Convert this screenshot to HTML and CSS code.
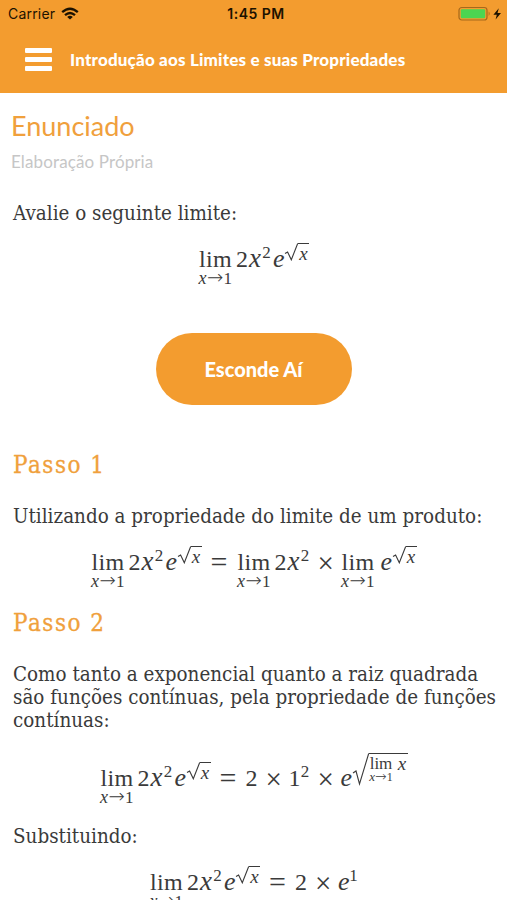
FILE: index.html
```html
<!DOCTYPE html>
<html lang="pt-BR">
<head>
    <meta charset="UTF-8">
    <meta name="viewport" content="width=device-width, initial-scale=1.0">
    <title>Introdução aos Limites e suas Propriedades</title>
    <link rel="stylesheet" href="styles.css">
</head>
<body>

    <header>
        <div class="status-bar">
            <div class="carrier">
                <span>Carrier</span>
                <svg width="18" height="14" viewBox="0 0 18 14" fill="none" stroke="#1c1200" stroke-width="2.3">
                    <path d="M1.2 5.2Q9 -1.8 16.8 5.2"/>
                    <path d="M4 8.2Q9 3.8 14 8.2"/>
                    <path d="M9 12.6L6.2 9.9Q9 7.6 11.8 9.9Z" fill="#1c1200" stroke="none"/>
                </svg>
            </div>
            <span class="time">1:45 PM</span>
            <div class="battery">
                <svg width="44" height="16" viewBox="0 0 44 16">
                    <rect x="1" y="1.5" width="28" height="12.5" rx="2.8" fill="none" stroke="#a5691c" stroke-width="1.2"/>
                    <rect x="2.8" y="3.2" width="24.4" height="9" rx="1.2" fill="#4cd551"/>
                    <path d="M30.7 5.6Q32.6 7.7 30.7 9.9Z" fill="#a5691c"/>
                    <path d="M40.8 2.2L35.4 8.7H38.8L37.6 13.6L43 7H39.5Z" fill="#1c1200"/>
                </svg>
            </div>
        </div>
        <div class="nav">
            <div class="menu"><span></span><span></span><span></span></div>
            <h1>Introdução aos Limites e suas Propriedades</h1>
        </div>
    </header>

    <main>
        <h2>Enunciado</h2>
        <p class="source">Elaboração Própria</p>

        <p class="text first">Avalie o seguinte limite:</p>
        <div class="math">
            <span class="lim"><span>lim</span><span class="under"><i>x</i><b>→</b>1</span></span><span class="num">2</span><i class="var">x</i><span class="sup">2</span><i class="exp">e</i><span class="root"><svg width="14" height="18" viewBox="0 0 14 18"><path d="M1 10.5L3.6 9L7.3 16.8L13.7 .5"/></svg><i>x</i></span>
        </div>

        <button>Esconde Aí</button>

        <h3>Passo 1</h3>
        <p class="text">Utilizando a propriedade do limite de um produto:</p>
        <div class="math">
            <span class="lim"><span>lim</span><span class="under"><i>x</i><b>→</b>1</span></span><span class="num">2</span><i class="var">x</i><span class="sup">2</span><i class="exp">e</i><span class="root"><svg width="14" height="18" viewBox="0 0 14 18"><path d="M1 10.5L3.6 9L7.3 16.8L13.7 .5"/></svg><i>x</i></span><span class="eq">=</span><span class="lim"><span>lim</span><span class="under"><i>x</i><b>→</b>1</span></span><span class="num">2</span><i class="var">x</i><span class="sup">2</span><span class="times">×</span><span class="lim"><span>lim</span><span class="under"><i>x</i><b>→</b>1</span></span><i class="exp">e</i><span class="root"><svg width="14" height="18" viewBox="0 0 14 18"><path d="M1 10.5L3.6 9L7.3 16.8L13.7 .5"/></svg><i>x</i></span>
        </div>

        <h3>Passo 2</h3>
        <p class="text">Como tanto a exponencial quanto a raiz quadrada<br>são funções contínuas, pela propriedade de funções<br>contínuas:</p>
        <div class="math tall">
            <span class="lim"><span>lim</span><span class="under"><i>x</i><b>→</b>1</span></span><span class="num">2</span><i class="var">x</i><span class="sup">2</span><i class="exp">e</i><span class="root"><svg width="14" height="18" viewBox="0 0 14 18"><path d="M1 10.5L3.6 9L7.3 16.8L13.7 .5"/></svg><i>x</i></span><span class="eq">=</span><span class="num">2</span><span class="times">×</span><span class="num">1</span><span class="sup">2</span><span class="times">×</span><i class="exp">e</i><span class="root big"><svg width="17" height="33" viewBox="0 0 17 33"><path d="M1 20L4 18L7.5 31L16.7 .5"/></svg><span class="inner"><span class="small-lim"><span>lim</span><span class="under"><i>x</i><b>→</b>1</span></span><i>x</i></span></span>
        </div>

        <p class="text">Substituindo:</p>
        <div class="math">
            <span class="lim"><span>lim</span><span class="under"><i>x</i><b>→</b>1</span></span><span class="num">2</span><i class="var">x</i><span class="sup">2</span><i class="exp">e</i><span class="root"><svg width="14" height="18" viewBox="0 0 14 18"><path d="M1 10.5L3.6 9L7.3 16.8L13.7 .5"/></svg><i>x</i></span><span class="eq">=</span><span class="num">2</span><span class="times">×</span><i class="exp">e</i><span class="sup">1</span>
        </div>
    </main>

</body>
</html>
```
FILE: styles.css
```css
* {
    box-sizing: border-box;
}
body {
    margin: 0;
    height: 900px;
    overflow: hidden;
    background-color: #fff;
    color: #3a3a3a;
    font-family: Lato, sans-serif;
}
h1, h2, h3, p {
    margin: 0;
}
/* Topo */
header {
    height: 93px;
    background-color: #f39c2f;
}
.status-bar {
    display: grid;
    grid-template-columns: 1fr auto 1fr;
    align-items: center;
    height: 27px;
    padding: 0 5px 0 8px;
    color: #1c1200;
    font-family: Inter, sans-serif;
    font-size: 14px;
    letter-spacing: 0.2px;
}
.carrier {
    display: flex;
    align-items: center;
    gap: 6px;
}
.time {
    padding-left: 2px;
    font-weight: 600;
    letter-spacing: 0.5px;
}
.battery {
    display: flex;
    justify-content: flex-end;
}
.nav {
    display: flex;
    align-items: center;
    height: 65px;
    padding-left: 25px;
    gap: 18px;
}
.menu {
    display: flex;
    flex-direction: column;
    gap: 4px;
}
.menu span {
    width: 27px;
    height: 5px;
    border-radius: 1px;
    background-color: #fff;
}
h1 {
    color: #fff;
    font-size: 17px;
    font-weight: 900;
    letter-spacing: 0.18px;
    white-space: nowrap;
}
/* Conteúdo */
main {
    padding: 17px 11px 0;
}
h2 {
    color: #f0a03c;
    font-size: 27px;
    font-weight: 400;
    line-height: 32px;
}
.source {
    margin-top: 10px;
    color: #c6c6c6;
    font-size: 17px;
    letter-spacing: 0.12px;
    line-height: 20px;
}
.text {
    padding-left: 2px;
    font-family: "DejaVu Serif Condensed", "DejaVu Serif", serif;
    font-stretch: condensed;
    font-size: 20.4px;
    letter-spacing: 0.01px;
    line-height: 23px;
    white-space: nowrap;
}
.first {
    margin-top: 30px;
}
h3 {
    padding-left: 2px;
    margin-bottom: 26px;
    color: #f0a03c;
    font-family: "DejaVu Serif Condensed", "DejaVu Serif", serif;
    font-stretch: condensed;
    font-size: 24px;
    font-weight: 400;
    letter-spacing: 1.5px;
    line-height: 28px;
    -webkit-text-stroke: 0.3px #f0a03c;
}
button {
    display: block;
    width: 196px;
    height: 72px;
    margin: 27px auto 46px;
    border: none;
    border-radius: 36px;
    background-color: #f39c2f;
    color: #fff;
    font-family: Lato, sans-serif;
    font-size: 20px;
    font-weight: 900;
}
/* Fórmulas */
.math {
    height: 81px;
    padding-top: 17px;
    text-align: center;
    white-space: nowrap;
    font-family: "Liberation Serif", serif;
    font-size: 24px;
    line-height: 32px;
}
.lim {
    display: inline-flex;
    flex-direction: column;
    align-items: center;
    width: 35px;
    height: 40px;
    margin-right: 3px;
    letter-spacing: 0.3px;
}
.under {
    margin-top: -3px;
    font-size: 17px;
    line-height: 12px;
}
.under i {
    font-size: 18px;
}
.under b {
    font-family: "DejaVu Sans", sans-serif;
    font-size: 1.15em;
    font-weight: 200;
    line-height: 0;
}
.num, .var, .sup, .exp, .eq, .times {
    display: inline-block;
}
.num {
    width: 12px;
}
.var {
    width: 14px;
    font-size: 27px;
}
.sup {
    width: 9px;
    font-size: 17px;
    line-height: 16px;
    vertical-align: 9px;
}
.exp {
    width: 11px;
    margin-left: 2px;
    font-size: 26px;
}
.eq {
    width: 17px;
    margin: 0 9px;
    font-size: 30px;
    line-height: 24px;
    vertical-align: -2px;
}
.times {
    width: 14px;
    margin: 0 9px 0 8px;
    font-size: 29px;
    line-height: 24px;
    vertical-align: -3px;
}
.times + .exp {
    margin-left: 0;
}
.root {
    display: inline-flex;
    height: 18px;
    vertical-align: 6px;
}
.root svg {
    fill: none;
    stroke: #3a3a3a;
    stroke-width: 1.1;
}
.root > i {
    width: 11px;
    border-top: 1px solid #3a3a3a;
    font-size: 19px;
    line-height: 19px;
}
.tall {
    height: 93px;
    padding-top: 21px;
}
.big {
    height: 33px;
    vertical-align: 0;
}
.inner {
    display: flex;
    height: 33px;
    border-top: 1px solid #3a3a3a;
    font-size: 17px;
    line-height: 20px;
}
.inner > i {
    width: 11px;
    margin-left: 3px;
    font-size: 19px;
}
.small-lim {
    display: flex;
    flex-direction: column;
    align-items: center;
    width: 25px;
}
.small-lim .under {
    font-size: 12px;
}
.small-lim .under i {
    font-size: 13px;
}
```
